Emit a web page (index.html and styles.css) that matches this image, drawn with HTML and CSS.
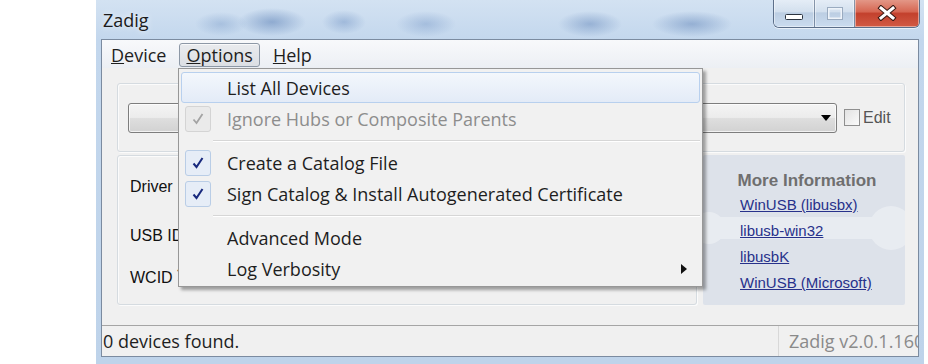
FILE: index.html
```html
<!doctype html>
<html lang="en">
<head>
    <meta charset="UTF-8">
    <meta name="viewport" content="width=device-width, initial-scale=1.0">
    <title>Zadig</title>
    <link rel="stylesheet" href="styles.css">
</head>
<body>
<div class="window">
    <div class="titlebar">
        <span class="title">Zadig</span>
        <div class="caption-buttons">
            <span class="cap-btn cap-min">
                <svg width="20" height="8" viewBox="0 0 20 8"><rect x="1.5" y="1.5" width="17" height="5" rx="1" fill="#fff" stroke="#2b3440" stroke-width="1"/></svg>
            </span>
            <span class="cap-btn cap-max">
                <svg width="16" height="13" viewBox="0 0 16 13"><rect x="1.5" y="1.5" width="13" height="10" fill="none" stroke="#eef3f9" stroke-width="2"/><rect x="0.5" y="0.5" width="15" height="12" fill="none" stroke="#9aabc0" stroke-width="1"/></svg>
            </span>
            <span class="cap-btn cap-close">
                <svg width="20" height="16" viewBox="0 0 20 16">
                    <path d="M4 3 L16 13 M16 3 L4 13" stroke="#3a1a14" stroke-width="5" stroke-linecap="square"/>
                    <path d="M4 3 L16 13 M16 3 L4 13" stroke="#fff" stroke-width="3" stroke-linecap="square"/>
                </svg>
            </span>
        </div>
    </div>

    <div class="client">
        <div class="menubar">
            <span class="mb-item"><u>D</u>evice</span>
            <span class="mb-item open"><u>O</u>ptions</span>
            <span class="mb-item"><u>H</u>elp</span>
        </div>

        <div class="content">
            <div class="group top-group">
                <div class="combo">
                    <svg width="10" height="6" viewBox="0 0 10 6"><path d="M0 0 H10 L5 6 Z" fill="#000"/></svg>
                </div>
                <span class="checkbox"></span>
                <span class="edit-label">Edit</span>
            </div>

            <div class="lower">
                <div class="group driver-group">
                    <div class="field">Driver</div>
                    <div class="field usb-row">USB ID</div>
                    <div class="field wcid-row">WCID <sup>?</sup></div>
                </div>
                <div class="info-panel">
                    <svg class="usb-decor" width="202" height="150" viewBox="0 0 202 150">
                        <rect x="0" y="62" width="185" height="22" rx="11" fill="#fff"/>
                        <circle cx="188" cy="73" r="22" fill="#fff"/>
                        <circle cx="6" cy="73" r="16" fill="#fff"/>
                    </svg>
                    <div class="info-title">More Information</div>
                    <div class="info-links">
                        <a href="#">WinUSB (libusbx)</a>
                        <a href="#">libusb-win32</a>
                        <a href="#">libusbK</a>
                        <a href="#">WinUSB (Microsoft)</a>
                    </div>
                </div>
            </div>
        </div>

        <div class="statusbar">
            <span class="status-main">0 devices found.</span>
            <span class="status-version">Zadig v2.0.1.160</span>
        </div>

        <!-- Options menu, opened -->
        <div class="dropdown">
            <div class="menu-item hover">
                <span class="check"></span>
                <span>List All Devices</span>
            </div>
            <div class="menu-item disabled">
                <span class="check on">
                    <svg width="14" height="14" viewBox="0 0 14 14"><path d="M2.5 7.5 L5.5 11 L11.5 2" fill="none" stroke="#a3a3a3" stroke-width="1.8"/></svg>
                </span>
                <span>Ignore Hubs or Composite Parents</span>
            </div>
            <div class="menu-sep"></div>
            <div class="menu-item">
                <span class="check on">
                    <svg width="14" height="14" viewBox="0 0 14 14"><path d="M2.5 7.5 L5.5 11 L11.5 2" fill="none" stroke="#18297d" stroke-width="2"/></svg>
                </span>
                <span>Create a Catalog File</span>
            </div>
            <div class="menu-item">
                <span class="check on">
                    <svg width="14" height="14" viewBox="0 0 14 14"><path d="M2.5 7.5 L5.5 11 L11.5 2" fill="none" stroke="#18297d" stroke-width="2"/></svg>
                </span>
                <span>Sign Catalog &amp; Install Autogenerated Certificate</span>
            </div>
            <div class="menu-sep"></div>
            <div class="menu-item">
                <span class="check"></span>
                <span>Advanced Mode</span>
            </div>
            <div class="menu-item">
                <span class="check"></span>
                <span>Log Verbosity</span>
                <svg class="submenu-arrow" width="6" height="10" viewBox="0 0 6 10"><path d="M0 0 L6 5 L0 10 Z" fill="#111"/></svg>
            </div>
        </div>
    </div>
</div>
</body>
</html>
```

FILE: styles.css
```css
/* Page */
body {
    margin: 0;
    background: #fff;
    font-family: "Open Sans", "Noto Sans", sans-serif;
    overflow: hidden;
}

/* Aero glass frame */
.window {
    width: 828px;
    height: 364px;
    margin-left: 96px;
    display: flex;
    flex-direction: column;
    background:
        radial-gradient(ellipse 34px 14px at 176px 22px, rgba(70, 110, 170, 0.45), transparent),
        radial-gradient(ellipse 26px 12px at 125px 24px, rgba(90, 130, 185, 0.3), transparent),
        radial-gradient(ellipse 22px 12px at 248px 22px, rgba(80, 120, 180, 0.35), transparent),
        radial-gradient(ellipse 30px 13px at 330px 24px, rgba(80, 120, 180, 0.3), transparent),
        radial-gradient(ellipse 32px 13px at 494px 24px, rgba(70, 110, 170, 0.38), transparent),
        radial-gradient(ellipse 40px 13px at 596px 24px, rgba(70, 110, 170, 0.4), transparent),
        linear-gradient(#d3e2f2, #c3d7ed 40px, #bed3ea);
}

.titlebar {
    height: 39px;
    flex-shrink: 0;
    display: flex;
    justify-content: space-between;
    align-items: flex-start;
}

.title {
    padding: 8px 0 0 7px;
    font-size: 18px;
    line-height: 25px;
    color: #1b1b1b;
    text-shadow: 0 0 6px rgba(255, 255, 255, 0.9);
}

.caption-buttons {
    display: flex;
    height: 28px;
    margin: -1px 4px 0 0;
    border: 1px solid rgba(45, 65, 95, 0.7);
    border-top: none;
    border-radius: 0 0 6px 6px;
    overflow: hidden;
    box-shadow: 0 1px 0 rgba(255, 255, 255, 0.6);
}

.cap-btn {
    display: flex;
    justify-content: center;
    align-items: center;
    box-shadow: inset 0 0 0 1px rgba(255, 255, 255, 0.45);
}

.cap-min,
.cap-max {
    width: 40px;
    background: linear-gradient(#e6eef7, #d3e0ee 45%, #bccee3 50%, #cbdcef);
    border-right: 1px solid rgba(60, 80, 110, 0.55);
}

.cap-min svg {
    margin-top: 8px;
}

.cap-max {
    width: 39px;
}

.cap-close {
    width: 64px;
    background: linear-gradient(#e49b8b, #d66753 45%, #c3412d 52%, #d25a44);
}

/* Client area */
.client {
    position: relative;
    height: 318px;
    margin: 0 5px;
    box-sizing: border-box;
    border: 1px solid #7b8ba0;
    background: #f0f0f0;
    display: flex;
    flex-direction: column;
}

.menubar {
    height: 28px;
    flex-shrink: 0;
    display: flex;
    align-items: flex-start;
    padding-left: 2px;
    background: linear-gradient(#f8f9fb, #eceff4);
}

.mb-item {
    height: 24px;
    box-sizing: border-box;
    margin: 3px 6px 0 0;
    padding: 0 6px;
    border: 1px solid transparent;
    border-radius: 3px;
    font-size: 18px;
    line-height: 22px;
    color: #1e1e1e;
}

.mb-item.open {
    border-color: #8d98a6;
    background: linear-gradient(#e9ebee, #dcdfe4);
    box-shadow: inset 0 1px 0 rgba(255, 255, 255, 0.7);
}

.content {
    flex: 1;
    display: flex;
    flex-direction: column;
    gap: 3px;
    padding: 15px 0 0 15px;
}

.group {
    box-sizing: border-box;
    border: 1px solid #d5dbe0;
    border-radius: 3px;
    box-shadow: inset 1px 1px 0 #fbfbfb, 1px 1px 0 #fbfbfb;
}

.top-group {
    width: 788px;
    height: 69px;
    display: flex;
    align-items: center;
    padding-left: 10px;
}

.combo {
    width: 709px;
    height: 30px;
    box-sizing: border-box;
    border: 1px solid #7d7d7d;
    border-radius: 3px;
    background: linear-gradient(#f4f4f4, #ececec 48%, #dedede 52%, #d2d2d2);
    box-shadow: inset 0 0 0 1px rgba(255, 255, 255, 0.7);
    display: flex;
    align-items: center;
    justify-content: flex-end;
    padding-right: 5px;
}

.checkbox {
    width: 16px;
    height: 17px;
    box-sizing: border-box;
    margin-left: 7px;
    border: 1px solid #8f8f8f;
    background: linear-gradient(135deg, #e2e2e2, #fbfbfb);
}

.edit-label {
    margin-left: 3px;
    font-family: "Liberation Sans", Arial, sans-serif;
    font-size: 16px;
    color: #555;
}

.lower {
    display: flex;
    gap: 6px;
    height: 150px;
}

.driver-group {
    width: 580px;
    padding: 21px 0 0 12px;
}

.field {
    font-family: "Liberation Sans", Arial, sans-serif;
    font-size: 16px;
    line-height: 20px;
    color: #111;
}

.field sup {
    font-size: 10px;
}

.usb-row {
    margin-top: 29px;
}

.wcid-row {
    margin-top: 18px;
}

.info-panel {
    position: relative;
    width: 202px;
    background: #dde2ea;
    border-radius: 2px;
    overflow: hidden;
    padding-top: 17px;
    box-sizing: border-box;
}

.usb-decor {
    position: absolute;
    left: 0;
    top: 0;
    opacity: 0.35;
}

.info-title,
.info-links {
    position: relative;
}

.info-title {
    text-align: center;
    padding-left: 6px;
    font-family: "Liberation Sans", Arial, sans-serif;
    font-weight: bold;
    font-size: 17px;
    line-height: 18px;
    color: #6f6f6f;
}

.info-links {
    margin-top: 2px;
    padding-left: 37px;
    display: flex;
    flex-direction: column;
    align-items: flex-start;
}

.info-links a {
    font-family: "Liberation Sans", Arial, sans-serif;
    font-size: 15px;
    line-height: 26px;
    color: #27318b;
}

/* Status bar */
.statusbar {
    height: 31px;
    flex-shrink: 0;
    box-sizing: border-box;
    border-top: 1px solid #a5a5a5;
    display: flex;
    font-size: 18px;
    line-height: 30px;
}

.status-main {
    width: 675px;
    flex-shrink: 0;
    padding-left: 1px;
    color: #1e1e1e;
}

.status-version {
    flex: 1;
    border-left: 1px solid #d8d8d8;
    padding-left: 10px;
    color: #8a8a8a;
    white-space: nowrap;
    overflow: hidden;
}

/* Options dropdown */
.dropdown {
    position: absolute;
    left: 76px;
    top: 28px;
    width: 525px;
    box-sizing: border-box;
    border: 1px solid #979797;
    background: #f1f1f1;
    padding: 3px 2px 2px;
    box-shadow: 3px 3px 3px rgba(0, 0, 0, 0.35);
}

.menu-item {
    height: 31px;
    box-sizing: border-box;
    display: flex;
    align-items: center;
    padding-left: 3px;
    border: 1px solid transparent;
    border-radius: 3px;
    font-size: 18px;
    color: #1e1e1e;
}

.menu-item.hover {
    border-color: #b8d0ee;
    background: linear-gradient(#f3f7fc, #e3ebf7);
}

.menu-item.disabled {
    color: #8d8d8d;
}

.check {
    width: 26px;
    height: 26px;
    box-sizing: border-box;
    margin-right: 16px;
    border-radius: 3px;
    display: flex;
    justify-content: center;
    align-items: center;
}

.check.on {
    border: 1px solid #b9cde6;
    background: #e6edf7;
}

.disabled .check.on {
    border-color: #d4d4d4;
    background: #eaeaea;
}

.menu-sep {
    height: 13px;
    margin-left: 32px;
    background: linear-gradient(transparent 6px, #d6d6d6 6px, #d6d6d6 7px, #fff 7px, #fff 8px, transparent 8px);
}

.submenu-arrow {
    margin-left: auto;
    margin-right: 12px;
}
```
